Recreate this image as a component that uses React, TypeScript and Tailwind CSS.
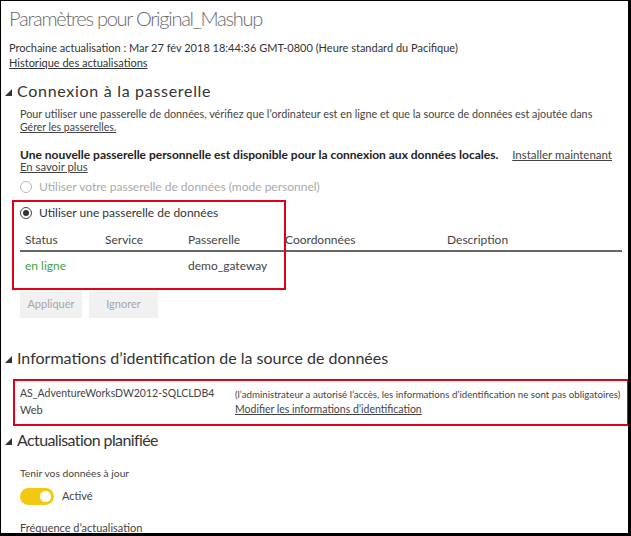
import React from "react";

const Tri = () => (
  <svg width="7" height="7" viewBox="0 0 7 7" className="shrink-0">
    <polygon points="7,0 7,7 0,7" fill="#333" />
  </svg>
);

const Heading = ({ children, className }: { children: React.ReactNode; className: string }) => (
  <div className={"flex items-center h-[22px] -ml-[4px] gap-[5px] text-[16px] text-[#333] whitespace-nowrap " + className}>
    <div className="pt-[2px]"><Tri /></div>
    <span>{children}</span>
  </div>
);

export default function App() {
  return (
    <div
      className="relative w-[631px] h-[536px] overflow-hidden bg-white border-l border-t border-r-[3px] border-b-[3px] border-black text-[#333] whitespace-nowrap"
      style={{ fontFamily: 'Lato, "Open Sans", sans-serif' }}
    >
      <div className="pl-[8px] pt-[3px]">
        <div className="h-[28px] flex items-center text-[20px] font-light text-[#6a6a6a] tracking-[-1.25px]">
          Paramètres pour Original_Mashup
        </div>
        <div className="mt-[8px] h-[16px] flex items-center text-[11px]">
          Prochaine actualisation : Mar 27 fév 2018 18:44:36 GMT-0800 (Heure standard du Pacifique)
        </div>
        <div className="h-[15px] flex items-center text-[11px] underline">Historique des actualisations</div>

        <Heading className="mt-[9px] tracking-[0.7px] text-[16.5px]">Connexion à la passerelle</Heading>

        <div className="ml-[11px]">
          <div className="mt-[5px] h-[14px] flex items-center text-[10.8px] text-[#444]">
            Pour utiliser une passerelle de données, vérifiez que l’ordinateur est en ligne et que la source de données est ajoutée dans
          </div>
          <div className="h-[14px] flex items-center text-[10.5px] underline text-[#444]">Gérer les passerelles.</div>

          <div className="mt-[13px] h-[13px] flex items-center justify-between pr-[16px]">
            <span className="text-[12px] font-bold text-[#222]">
              Une nouvelle passerelle personnelle est disponible pour la connexion aux données locales.
            </span>
            <span className="text-[11.5px] underline text-[#444]">Installer maintenant</span>
          </div>
          <div className="h-[13px] flex items-center text-[11.3px] underline text-[#444]">En savoir plus</div>

          <div className="mt-[4px] h-[18px] flex items-center gap-[7px] text-[12px] text-[#aaa]">
            <span className="w-[12px] h-[12px] rounded-full border border-[#bbb]" />
            <span>Utiliser votre passerelle de données (mode personnel)</span>
          </div>

          <div className="mt-[8px] h-[18px] flex items-center gap-[7px] text-[12px] text-[#333]">
            <span className="w-[12px] h-[12px] rounded-full border border-[#444] flex items-center justify-center">
              <span className="w-[6px] h-[6px] rounded-full bg-[#333]" />
            </span>
            <span>Utiliser une passerelle de données</span>
          </div>

          <div className="mt-[7px] w-[602px] h-[23px] flex items-center border-b-2 border-[#666] text-[12px] text-[#444]">
            <div className="w-[80px] pl-[5px]">Status</div>
            <div className="w-[83px] pl-[5px]">Service</div>
            <div className="w-[97px] pl-[5px]">Passerelle</div>
            <div className="w-[162px] pl-[5px]">Coordonnées</div>
            <div className="pl-[5px]">Description</div>
          </div>
          <div className="mt-[4px] h-[20px] flex items-center text-[12px] text-[#444]">
            <div className="w-[80px] pl-[5px] text-[#3fa33f]">en ligne</div>
            <div className="w-[83px] pl-[5px]"></div>
            <div className="w-[97px] pl-[5px]">demo_gateway</div>
          </div>

          <div className="mt-[15px] flex gap-[7px]">
            <div className="w-[62px] h-[27px] flex items-center justify-center bg-[#f1f1f1] text-[11px] text-[#a6a6a6]">Appliquer</div>
            <div className="w-[69px] h-[27px] flex items-center justify-center bg-[#f1f1f1] text-[11px] text-[#a6a6a6]">Ignorer</div>
          </div>
        </div>

        <Heading className="mt-[29px]">Informations d’identification de la source de données</Heading>

        <div className="ml-[11px] mt-[17px] flex text-[#444]">
          <div className="w-[215px]">
            <div className="h-[16px] flex items-center text-[10.5px]">AS_AdventureWorksDW2012-SQLCLDB4</div>
            <div className="h-[16px] flex items-center text-[11px]">Web</div>
          </div>
          <div>
            <div className="h-[16px] flex items-center text-[9.7px]">
              (l’administrateur a autorisé l’accès, les informations d’identification ne sont pas obligatoires)
            </div>
            <div className="h-[16px] flex items-center underline text-[10.5px]">Modifier les informations d’identification</div>
          </div>
        </div>

        <Heading className="mt-[11px] tracking-[-0.6px]">Actualisation planifiée</Heading>

        <div className="ml-[11px]">
          <div className="mt-[15px] h-[16px] flex items-center text-[10.3px] text-[#444]">Tenir vos données à jour</div>
          <div className="mt-[6px] h-[17px] flex items-center gap-[8px]">
            <div className="w-[34px] h-[17px] rounded-full bg-[#f2c811] flex items-center justify-end pr-[3px]">
              <span className="w-[11px] h-[11px] rounded-full bg-white" />
            </div>
            <span className="text-[11px] text-[#444]">Activé</span>
          </div>
          <div className="mt-[15px] h-[16px] flex items-center text-[11px] text-[#444]">Fréquence d’actualisation</div>
        </div>
      </div>

      <div className="absolute left-[11px] top-[199px] w-[274px] h-[90px] border-2 border-[#e3001b]" />
      <div className="absolute left-[12px] top-[378px] w-[616px] h-[47px] border-2 border-[#e3001b]" />
    </div>
  );
}
